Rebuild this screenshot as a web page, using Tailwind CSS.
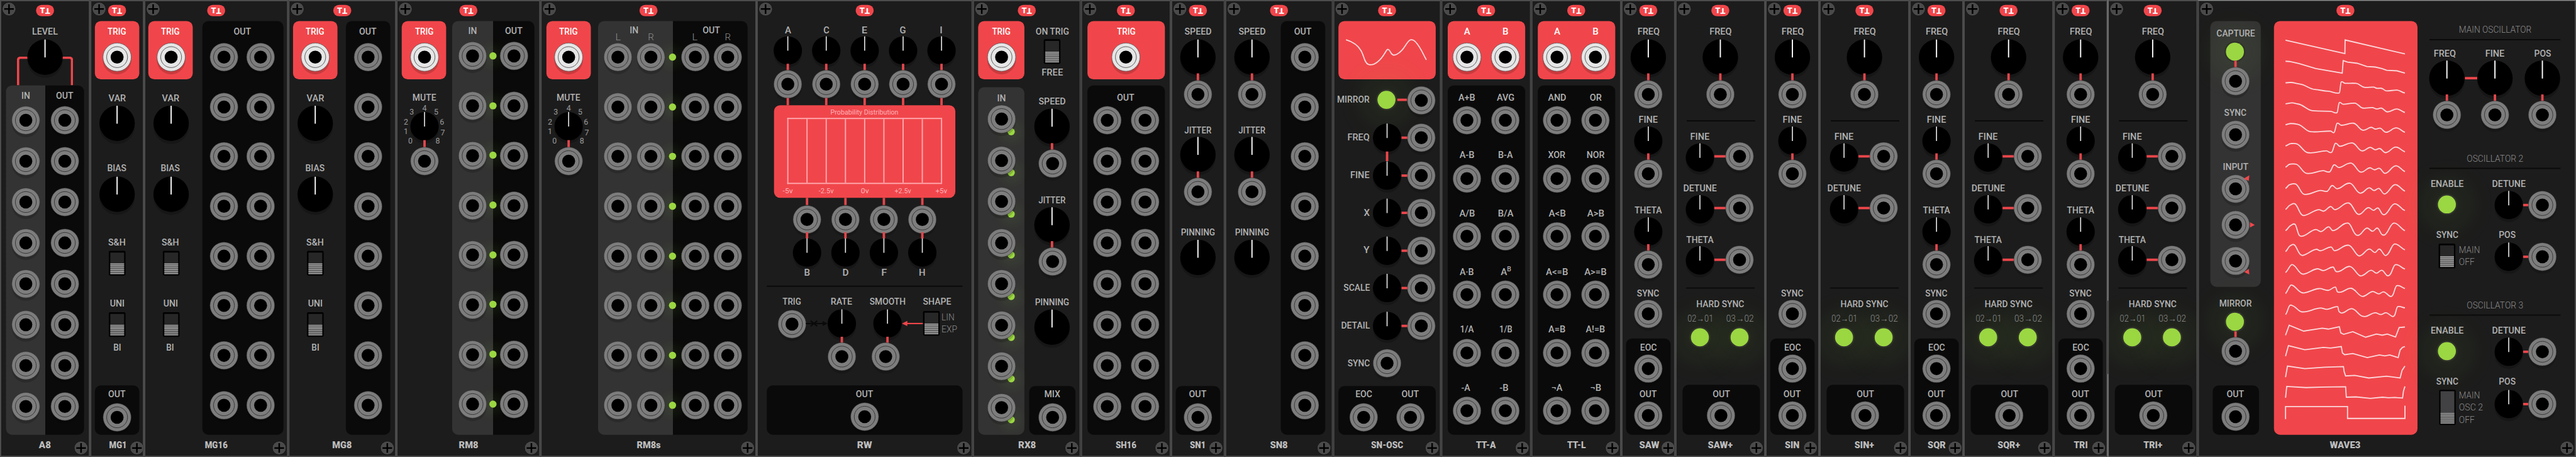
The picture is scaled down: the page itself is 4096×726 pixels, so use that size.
<!DOCTYPE html>
<html lang="en">
<head>
<meta charset="utf-8">
<title>Modular rack</title>
<script src="https://cdn.jsdelivr.net/npm/@tailwindcss/browser@4"></script>
</head>
<body class="bg-[#1c1c1c] overflow-hidden w-[4096px] h-[726px]">
<svg class="hidden">
  <defs>
    <g id="jack">
      <circle cx="24" cy="29" r="23.4" fill="#000" fill-opacity=".16"/>
      <circle cx="24" cy="24" r="23.3" fill="#7d7d7d" stroke="#303030" stroke-width=".6"/>
      <circle cx="24" cy="24" r="17.4" fill="none" stroke="#333" stroke-width="1"/>
      <circle cx="24" cy="24" r="10.8" fill="#000"/>
    </g>
    <g id="jack-light">
      <circle cx="24" cy="29" r="23.8" fill="#000" fill-opacity=".16"/>
      <circle cx="24" cy="24" r="23.5" fill="#e6e6e6" stroke="#555" stroke-width=".8"/>
      <circle cx="24" cy="24" r="17.4" fill="none" stroke="#555" stroke-width="1"/>
      <circle cx="24" cy="24" r="10.8" fill="#000"/>
    </g>
    <g id="knob-lg">
      <circle cx="30" cy="35" r="29.5" fill="#000" fill-opacity=".18"/>
      <circle cx="30" cy="30" r="29.5" fill="#000"/>
      <path d="M30 .8V30.6" stroke="#fff" stroke-width="2"/>
    </g>
    <g id="knob-sm">
      <circle cx="24" cy="29" r="23.5" fill="#000" fill-opacity=".18"/>
      <circle cx="24" cy="24" r="23.6" fill="#000"/>
      <path d="M24 .4V24.4" stroke="#e8e8e8" stroke-width="1.7"/>
    </g>
    <g id="screw">
      <circle cx="15" cy="15" r="11.6" fill="#000" fill-opacity=".2"/>
      <circle cx="15" cy="15" r="10.9" fill="#4a4a4a"/>
      <path d="M7 15H23M15 7V23" stroke="#000" stroke-width="2.6"/>
    </g>
    <g id="switch">
      <rect x=".2" y=".2" width="27.8" height="41" rx="2.2" fill="#000"/>
      <rect x="2.7" y="3" width="23" height="18.5" fill="#272727"/>
      <rect x="2.7" y="21" width="23" height="18.2" fill="#585858"/>
      <path d="M2.7 21.8h23M2.7 24.8h23M2.7 27.8h23M2.7 31h23M2.7 34.4h23M2.7 37.8h23" stroke="#a0a0a0" stroke-width="1.5"/>
    </g>
    <g id="switch-tall">
      <rect x=".2" y=".2" width="27.4" height="58.6" rx="2.2" fill="#000"/>
      <rect x="2.4" y="2.6" width="23" height="37" fill="#424245"/>
      <rect x="2.4" y="38.6" width="23" height="18.2" fill="#505050"/>
      <path d="M2.4 39.4h23M2.4 42.4h23M2.4 45.4h23M2.4 48.6h23M2.4 52h23M2.4 55.4h23" stroke="#a0a0a0" stroke-width="1.5"/>
    </g>
  </defs>
</svg>

<main id="rack" class="flex w-[4290px] h-[760px] origin-top-left [transform:scale(0.95478,0.95526)] text-[#b2b2b2] font-medium text-[16px] leading-none [font-family:Roboto,'Liberation_Sans',sans-serif]"></main>

<script>
// Set widths of the lettering, in px.
const WIDTHS = {
  TRIG:30, OUT:28, VAR:28, BIAS:31, 'S&H':28, UNI:23.5, BI:12, LEVEL:42, IN:13.5, MUTE:38.5, SPEED:44, JITTER:44,
  PINNING:56, FREE:34.5, 'ON TRIG':54.6, MIX:25.5, FREQ:36, FINE:31, THETA:44.5, SYNC:36, EOC:27, DETUNE:55,
  MIRROR:53, SCALE:43, DETAIL:47, X:9, Y:9, RATE:35, SMOOTH:59, SHAPE:46, 'A+B':27, AVG:28.5, 'A-B':24, 'B-A':23.5,
  'A/B':25, 'B/A':25, 'A·B':22.5, '1/A':22, '1/B':20.5, '-A':14, '-B':14, AND:29.5, OR:19, XOR:28, NOR:29,
  'A<B':27.5, 'A>B':27.5, 'A<=B':36, 'A>=B':36, 'A=B':27.5, 'A!=B':31, '¬A':17.5, '¬B':17.5, POS:27, ENABLE:54,
  CAPTURE:63, INPUT:41.5, A:9.5, B:9, C:9, D:9.5, E:8.5, F:8.5, G:9.5, H:10, I:3.6, L:8, R:9,
  A8:19, MG1:28.5, MG16:37, MG8:31.5, RM8:31.5, RM8s:39, RW:24, RX8:28.5, SH16:33.5, SN1:25.5, SN8:28.5, 'SN-OSC':52.5,
  'TT-A':32, 'TT-L':30, SAW:32.5, 'SAW+':40.5, SIN:23.5, 'SIN+':31.5, SQR:29, 'SQR+':36.5, TRI:22, 'TRI+':30.5, WAVE3:50,
  LIN:20.5, EXP:25, MAIN:34, OFF:25, 'OSC 2':39, 'MAIN OSCILLATOR':120, 'OSCILLATOR 2':93, 'OSCILLATOR 3':93,
  'HARD SYNC':78.7, '02→01':42, '03→02':45, 'Probability Distribution':112, '-5v':16, '-2.5v':24, '0v':12.5, '+2.5v':26.5, '+5v':18.5
};
const esc = s => s.replace(/&/g, '&amp;').replace(/</g, '&lt;');

// ---- parts: each is {x: centre, w, h, html, dy} ----
const use = (id, w, h, cls) => (x, dy = 0) => ({ x, w, h, dy, html: `<svg class="${cls} block overflow-visible"><use href="#${id}"/></svg>` });
const J = use('jack', 48, 48, 'w-[48px] h-[48px]');
const JL = use('jack-light', 48, 48, 'w-[48px] h-[48px]');
const K = use('knob-lg', 60, 60, 'w-[60px] h-[60px]');
const k = use('knob-sm', 48, 48, 'w-[48px] h-[48px]');
const SW = use('switch', 28, 42, 'w-[28px] h-[42px]');
const SWT = use('switch-tall', 28, 59, 'w-[28px] h-[59px]');
const label = (cls, align) => (t, x, dy = 0) => ({ x, w: 2, h: 20, dy,
  html: `<div class="flex w-[2px] h-[20px] items-center whitespace-nowrap ${align}"><span data-fit="${WIDTHS[t] || ''}" class="block shrink-0 ${cls}">${esc(t)}</span></div>` });
const L = label('', 'justify-center');
const LW = label('text-white', 'justify-center');
const LR = label('origin-right', 'justify-end');
const LD = label('font-light text-[#8c8c8c] origin-left', 'justify-start');
const LC = label('font-light text-[#8c8c8c]', 'justify-center');
const LP = label('text-[12px] font-normal text-[#ffb3b8]', 'justify-center');
const SUP = (x) => ({ x, w: 2, h: 20, html: `<div class="flex w-[2px] h-[20px] items-center justify-center whitespace-nowrap"><span class="block shrink-0 leading-none">A<sup class="text-[11px] leading-none -top-[6px]">B</sup></span></div>` });
const box = (w, h, cls) => (x, dy = 0) => ({ x, w, h, dy, html: `<div class="${cls}"></div>` });
const led = box(12, 12, 'size-[12px] rounded-full bg-[#9bd742] shadow-[0_0_22px_9px_rgba(155,215,66,0.11)]');
const LED = box(30, 30, 'size-[30px] rounded-full bg-[#9bd742] ring-[2.5px] ring-[#30332b] shadow-[0_0_50px_24px_rgba(155,215,66,0.085)]');
const V = box(4, 12, 'w-[4px] h-[12px] bg-[#e4464b]');
const Vs = box(4, 16, 'w-[4px] h-[16px] bg-[#f0464b]');
const H = (x0, x1, dy = 0) => ({ x: (x0 + x1) / 2, w: x1 - x0, h: 4, dy, html: `<div class="h-[4px] bg-[#f0464b]"></div>` });
const RULE = (x0, x1) => ({ x: (x0 + x1) / 2, w: x1 - x0, h: 2, html: `<div class="h-[2px] bg-[#0a0a0a]"></div>` });
const SVG = (x, w, h, inner, dy = 0) => ({ x, w, h, dy, html: `<svg class="block overflow-visible" width="${w}" height="${h}" viewBox="0 0 ${w} ${h}">${inner}</svg>` });

// ---- layout ----
const line = (ox, kids) => { let c = ox; return kids.map(p => {
  const ml = p.x - p.w / 2 - c; c = p.x + p.w / 2;
  return `<div class="shrink-0" style="width:${p.w.toFixed(2)}px;margin-left:${ml.toFixed(2)}px;margin-top:${2 * (p.dy || 0)}px">${p.html}</div>`; }).join(''); };
const stack = (ox, oy, rows) => { let c = oy; return rows.map(([y, ...kids]) => {
  const h = Math.max(...kids.map(p => p.h)), mt = y - h / 2 - c; c = y + h / 2;
  return `<div class="flex items-center shrink-0" style="height:${h.toFixed(2)}px;margin-top:${mt.toFixed(2)}px">${line(ox, kids)}</div>`; }).join(''); };
const panel = (x, y, w, h, cls, rows) => ({ x: x + w / 2, w, h, y,
  html: `<div class="flex flex-col ${cls}" style="height:${h}px">${stack(x, y, rows)}</div>` });
const PR = (...a) => [a[1] + a[3] / 2, panel(...a)];
const screw = '<svg class="size-[30px] block"><use href="#screw"/></svg>';
const logo = '<div class="flex w-[30px] h-[19px] shrink-0 items-center justify-center rounded-full bg-[#f0464b] text-white font-black text-[13.5px]"><span>T</span><span class="rotate-180">T</span></div>';

const module_ = (name, W, cols, dx = 0) => {
  let c = 0;
  const body = cols.map(p => { const ml = p.x - p.w / 2 - c; c = p.x + p.w / 2;
    return `<div class="shrink-0" style="width:${p.w}px;margin-left:${ml.toFixed(2)}px;margin-top:${p.y - 35}px">${p.html}</div>`; }).join('');
  return `<section class="flex flex-col shrink-0 h-[760px] overflow-hidden bg-[#1c1c1c] border-y-2 border-[#4f4f4f] shadow-[inset_2px_0_0_#4f4f4f,inset_-2px_0_0_#4f4f4f]" style="width:${W}px">
    <header class="grid grid-cols-[30px_1fr_30px] h-[33px] -mt-[2px] shrink-0">${screw}<div class="flex justify-center pt-[8px]" style="margin-left:${2 * dx}px">${logo}</div></header>
    <div class="flex items-start h-[688px] shrink-0 mt-[2px]">${body}</div>
    <footer class="grid grid-cols-[30px_1fr_30px] h-[35px] shrink-0"><span></span><div class="flex justify-center whitespace-nowrap pt-[10px] h-[30px]" style="margin-left:${2 * dx}px"><span data-fit="${WIDTHS[name]}" class="block shrink-0 font-black text-[15.5px] text-[#bdbdbd]">${name}</span></div><div class="pt-[7px] h-[37px]">${screw}</div></footer>
  </section>`;
};

const RED = 'rounded-[10px] bg-[#f0464b]', INK = 'rounded-[10px] bg-[#0a0a0a]', GREY = 'rounded-[10px] bg-[#333333]';
const SPLIT = 'rounded-[10px] bg-[linear-gradient(90deg,#333333_50%,#0a0a0a_50%)]';
const range = n => [...Array(n).keys()];
const STEP8 = 82.68, STEPL = 67.93;
const jacks = (y0, step, ...xs) => range(8).map(i => [y0 + i * step, ...xs.map(x => J(x))]);
const trig = (x, cx, w = 74, lx = cx) => PR(x, 35, w, 97, RED, [[53.3, LW('TRIG', lx)], [95, JL(cx)]]);
const out = (x, w, cx, y = 641, jy = 693.6, t = 'OUT') => PR(x, y, w, 723 - y, INK, [[656.3, L(t, cx)], [jy, J(cx)]]);
const col = (w, rows, x = 0) => panel(x, 35, w, 688, '', rows);

const gates = (lx, cx) => [[163.8, L('VAR', lx)], [205, K(cx)], [280.2, L('BIAS', lx)], [323.3, K(cx)], [402.8, L('S&H', lx)], [438, SW(44.5)],
  [505, L('UNI', lx)], [540.5, SW(44.5)], [578.2, L('BI', lx)]];

const dialText = [['4', 0, -31], ['3', -21.3, -24.4], ['2', -31, -8], ['1', -31, 8.5], ['0', -23.5, 24.2], ['5', 19.3, -24.4], ['6', 29, -8], ['7', 30.3, 10.5], ['8', 22, 24.2]]
  .map(([t, x, y]) => `<text x="${40 + x}" y="${44.8 + y}" text-anchor="middle" font-size="13" font-weight="400" fill="#9a9a9a">${t}</text>`).join('');
const mute = cx => [[162, L('MUTE', cx)], [210.4, SVG(cx, 80, 80, dialText + '<use href="#knob-sm" x="16" y="16"/>')], [238.5, V(cx)], [267.6, J(cx)]];

const oscCol = theta => [[53.3, L('FREQ', 45)], [95, K(45)], [128, V(45)], [156.6, J(45)],
  [199.2, L('FINE', 45)], [233.6, k(45)], [261, V(45)], [288.9, J(45)],
  ...(theta ? [[350.4, L('THETA', 45)], [384.8, k(45)], [412.3, V(45)], [440, J(45)]] : []),
  [487.6, L('SYNC', 45)], [522, J(45)],
  PR(8, 562.7, 74, 160.3, INK, [[577.8, L('EOC', 45)], [613, J(45)], [656.3, L('OUT', 45)], [691.2, J(45)]])];
const osc = (name, theta) => module_(name, 90, [col(90, oscCol(theta))]);
const oscPlus = (name, theta) => module_(name, 150, [col(150, [[53.3, L('FREQ', 75)], [95, K(75)], [128, V(75)], [156.6, J(75)],
  [200.7, RULE(19.3, 133)],
  ...[['FINE', 227.3, 261.5], ['DETUNE', 313.1, 347.2], ...(theta ? [['THETA', 399.4, 433]] : [])].flatMap(([t, ly, y]) =>
    [[ly, L(t, 41.3)], [y, k(41.3, .5), H(65, 84, -1), J(107.3, -1)]]),
  [478.9, RULE(18, 131.7)], [506.5, L('HARD SYNC', 75)], [529.8, LC('02→01', 41.7), LC('03→02', 107.3)], [560.8, LED(40.7), LED(106.7)],
  out(11.7, 129, 76.3, 640, 691.2)])]);

const logic = (name, pairs) => module_(name, 150, [col(150, [
  PR(10.6, 35, 129, 97, RED, [[53.3, LW('A', 43), LW('B', 107.3)], [95, JL(43), JL(107.3)]]),
  PR(10.6, 142, 129, 581, INK, pairs.flatMap(([a, b], i) => [
    [161.9 + i * 96.55, L(a, a[0] === '-' ? 40.7 : 43), b === 'A^B' ? SUP(108) : L(b, b[0] === '-' ? 105 : 107.3)],
    [200.2 + i * 96.62, J(43), J(107.3)]]))])]);

const row62 = [['FREQ'], ['FINE'], ['X'], ['Y'], ['SCALE'], ['DETAIL']].flatMap(([t], i) => {
  const y = 229.2 + i * 62.5;
  const r = [[y, LR(t, 60, -.7), k(90, 0), H(113.5, 123.5), J(146.7, .2)]];
  if (i === 0) r.push([y + 31.2, Vs(90)]);
  return r; });

// Wavetable frames, top to bottom.
const FRAMES = [
  '363,138 609,184 610,137 858,185',
  '363,210 380,211 418,218 488,235 598,251 602,208 620,213 660,217 700,228 735,230 762,235 782,241 825,243 858,251',
  '363,284 385,283 420,288 485,307 540,313 586,319 594,281 610,286 655,286 692,300 728,299 742,303 760,303 782,312 825,309 858,319',
  '363,356 390,353 415,357 475,380 550,382 576,387 586,352 602,358 650,354 684,371 722,369 742,374 760,371 785,384 825,374 858,386',
  '363,428 385,424 415,427 466,452 550,450 564,455 577,423 594,430 645,423 684,447 718,437 735,443 755,440 779,454 822,439 858,454',
  '363,501 385,493 410,494 455,524 532,518 554,523 570,492 588,502 640,491 680,518 714,506 735,514 754,510 778,524 820,505 858,521',
  '363,574 380,564 408,564 450,595 518,586 546,590 564,566 584,575 635,560 675,591 712,576 732,583 752,578 776,595 820,569 858,589',
  '363,647 380,634 405,632 440,667 508,654 535,657 556,637 577,648 630,629 672,663 710,645 730,654 750,647 774,666 817,634 858,656',
  '363,719 382,704 402,700 430,737 440,740 500,720 522,725 550,709 568,720 625,697 662,735 672,735 706,713 728,722 746,714 766,736 776,736 815,700 858,723',
  '363,792 385,774 402,770 420,808 432,811 488,788 510,795 542,779 560,792 622,766 655,806 668,807 700,783 724,794 744,783 764,806 775,806 812,766 858,792',
  '363,864 382,844 398,840 425,874 434,877 490,856 508,861 552,848 566,861 625,842 665,878 675,877 710,855 734,867 752,855 776,877 785,874 815,838 858,858',
  '363,936 388,909 395,910 430,940 440,941 495,923 520,929 560,917 572,932 585,932 630,915 672,947 682,946 718,928 740,938 762,928 786,947 796,943 818,909 858,924',
  '363,1008 385,979 392,980 428,1004 440,1006 502,991 540,997 570,986 578,1002 592,1003 635,990 678,1017 688,1017 724,1001 750,1009 770,1002 798,1018 806,1015 824,981 858,991',
  '363,1080 382,1048 390,1049 432,1071 508,1058 535,1062 579,1053 585,1070 597,1075 638,1060 682,1086 693,1087 734,1074 758,1080 780,1074 808,1087 814,1084 828,1053 858,1057',
  '363,1151 378,1117 438,1137 515,1127 540,1130 586,1122 592,1143 604,1148 642,1139 695,1158 740,1147 764,1151 785,1147 819,1157 834,1125 858,1123',
  '363,1223 375,1187 443,1201 520,1193 550,1195 594,1190 599,1212 608,1218 642,1214 702,1228 752,1219 775,1222 795,1219 830,1228 838,1202 848,1193 858,1190',
  '363,1295 371,1257 443,1266 525,1261 603,1259 606,1276 612,1291 650,1289 708,1298 782,1292 838,1298 846,1272 858,1257',
  '363,1366 368,1327 448,1331 520,1329 612,1328 615,1364 655,1363 715,1368 765,1364 790,1366 815,1365 848,1367 852,1343 858,1327',
  '363,1439 363,1396 620,1396 620,1437 858,1437 858,1393'];
const spline = (s, t) => { const p = s.split(' ').map(q => q.split(',').map(Number)); let d = `M${p[0]}`;
  for (let i = 0; i < p.length - 1; i++) { const a = p[i - 1] || p[i], b = p[i], c = p[i + 1], e = p[i + 2] || c, m = (c[0] - b[0]) / 2;
    const s1 = c[0] - a[0] ? (c[1] - a[1]) / (c[0] - a[0]) : 0, s2 = e[0] - b[0] ? (e[1] - b[1]) / (e[0] - b[0]) : 0;
    d += t ? `C${b[0] + m * .8},${(b[1] + s1 * m * t).toFixed(1)} ${c[0] - m * .8},${(c[1] - s2 * m * t).toFixed(1)} ${c}` : `L${c}`; }
  return d; };
const waves = FRAMES.map((f, i) => `<path d="${spline(f, [0, 0, .25, .3, .4, .5, .5, .5, .5, .5, .5, .5, .5, .35, 0, 0, 0, 0, 0][i])}" fill="none" stroke="#fbd9dc" stroke-width="1.9" vector-effect="non-scaling-stroke"/>`).join('');
const screen = { x: 246.1, w: 239, h: 688.5, y: 35, html: `<svg class="block h-[688px] w-[239px] rounded-[10px] bg-[#f0464b]" viewBox="315 72 595 1421" preserveAspectRatio="none">${waves}</svg>` };

const tri = d => SVG(63, 64, 48, `<use href="#jack" x="8"/><path d="${d}" fill="#f0464b"/>`);
const extra = y => [
  [y, L('ENABLE', 415.4), L('DETUNE', 517.9)],
  [y + 35, LED(414.6, -.4), k(518.3, .4), H(542, 551.5, .4), J(574.5, .4)],
  [y + 85.4, L('SYNC', 415.4), L('POS', 515.5)]];

const A = 'ACEGI', B = 'BDFH', ax = [52.3, 116.3, 180, 243.7, 307.7], bx = [84.3, 148.3, 212.2, 276];
const cells = range(8).map(() => '<i class="flex-1 border-r-2 border-[#ffa8ae]"></i>').join('');

document.getElementById('rack').innerHTML = [
  module_('A8', 150, [col(150, [
    [53.3, L('LEVEL', 75)],
    [118.5, { x: 75, w: 94, h: 48, html: '<div class="h-[48px] rounded-t-[6px] border-x-4 border-t-4 border-[#f0464b]"></div>' }],
    [95, K(75)],
    PR(10, 142, 130, 581, SPLIT, [[159, L('IN', 42.5), L('OUT', 107.7)], ...jacks(200.2, STEPL, 42.5, 107.7)])])]),
  module_('MG1', 90, [col(90, [trig(8, 45), ...gates(45, 45), out(8, 74, 45)])]),
  module_('MG16', 240, [col(97, [trig(7, 45, 74, 44), ...gates(43.8, 45)]),
    panel(97, 35, 135, 688, INK, [[53.3, L('OUT', 164)], ...jacks(95, STEP8, 133.4, 194.4)])]),
  module_('MG8', 180, [col(96, [trig(8, 45), ...gates(45, 45)]),
    panel(96, 35, 74, 688, INK, [[53.3, L('OUT', 133)], ...jacks(95, STEP8, 133.4)])]),
  module_('RM8', 240, [col(92, [trig(9.3, 46.7), ...mute(46.7)]),
    panel(92.7, 35, 137.6, 688, SPLIT, [[52.3, L('IN', 126.8), L('OUT', 196)],
      ...range(8).map(i => [93.5 + i * STEP8, led(161, -.4), J(127), J(196.2)])])]),
  module_('RM8s', 360, [col(96, [trig(9.7, 46.7), ...mute(46.7)]),
    panel(96.3, 35, 248.4, 688, SPLIT, [[49.9, L('IN', 156.3), L('OUT', 284.7)],
      [62, LC('L', 129.3), LC('R', 183.7), LC('L', 257.7), LC('R', 312)],
      ...range(8).map(i => [95 + i * STEP8, led(220), J(129.3), J(183.7), J(257.9), J(312.2)])])]),
  module_('RW', 360, [col(360, [
    [50, ...[...A].map((t, i) => L(t, ax[i]))],
    [84.3, ...ax.map(x => k(x))],
    [111.8, ...ax.map(x => V(x))],
    [139.6, ...ax.map(x => J(x))],
    [169, ...ax.map(x => V(x))],
    PR(28.7, 175, 302.6, 154, RED, [
      [186.8, LP('Probability Distribution', 180)],
      [251.4, { x: 180.1, w: 257.6, h: 110, html: `<div class="flex h-[110px] border-l-2 border-y-2 border-[#ffa8ae]">${cells}</div>` }],
      [317, ...['-5v', '-2.5v', '0v', '+2.5v', '+5v'].map((t, i) => LP(t, ax[i]))]]),
    [335, ...bx.map(x => V(x))],
    [364.5, ...bx.map(x => J(x))],
    [392, ...bx.map(x => V(x))],
    [419.7, ...bx.map(x => k(x))],
    [453.7, ...[...B].map((t, i) => L(t, bx[i]))],
    [476, RULE(17, 343)],
    [502, L('TRIG', 58.7), L('RATE', 141.7), L('SMOOTH', 218.3), L('SHAPE', 300.3)],
    [538.3, J(58.7, .5), SVG(100, 36, 16, '<path d="M0 8H30M8 3.5L19 12.5M8 12.5L19 3.5" stroke="#0a0a0a" stroke-width="2.2"/><path d="M28 4L36.500 8L28 12Z" fill="#0a0a0a"/>'), k(141.7),
      k(218.3), SVG(259.8, 35, 12, '<path d="M35 6H7" stroke="#f0464b" stroke-width="2.2"/><path d="M0 6L9 1.700V10.300Z" fill="#f0464b"/>'), SW(291.5),
      { x: 309, w: 2, h: 40, html: `<div class="flex flex-col">${LD('LIN').html}${LD('EXP').html}</div>` }],
    [566, V(141.7), V(218.3)],
    [593.3, J(141.7), J(215.4)],
    out(17, 326, 180, 641, 693)])]),
  module_('RX8', 180, [
    col(90, [trig(9, 47.6, 77),
      PR(9, 145, 77, 578, GREY, [[163.8, L('IN', 47.5)],
        ...range(8).map(i => [198.2 + i * 68.5, led(63.5, 20.8), J(47.5)])])]),
    col(90, [[53.3, L('ON TRIG', 132.4)], [85.8, SW(132)], [121, L('FREE', 132.4)],
      [169, L('SPEED', 132.4)], [210.4, K(132.4)], [244, V(132.4)], [272.4, J(132.6)],
      [333, L('JITTER', 132.4)], [373.7, K(132.4)], [407, V(132.4)], [435.2, J(132.6)],
      [503, L('PINNING', 132.4)], [543.8, K(132.4)],
      out(94.4, 77, 132.6, 642, 693.6, 'MIX')], 90)]),
  module_('SH16', 150, [col(150, [trig(10.5, 75.2, 129.3),
    PR(10.5, 142, 129, 581, INK, [[161.9, L('OUT', 75)], ...jacks(200.2, STEPL, 44, 107.4)])])]),
  ...['SN1', 'SN8'].map(n => {
    const rows = [[53.3, L('SPEED', 45)], [95, K(45)], [128, V(45)], [156.6, J(45)], [216.7, L('JITTER', 45)], [257.4, K(45)], [290.7, V(45)], [319.4, J(45)],
      [387.3, L('PINNING', 45)], [428, K(45)]];
    return n === 'SN1' ? module_(n, 90, [col(90, [...rows, out(8, 74, 45, 642)])])
      : module_(n, 180, [col(90, rows), panel(93.2, 35, 73.6, 688, INK, [[53.3, L('OUT', 129.5)], ...jacks(95, STEP8, 133.4)])]); }),
  module_('SN-OSC', 180, [col(180, [
    [83.5, { x: 90, w: 162, h: 97, html: '<svg class="block h-[97px] w-[162px] rounded-[10px] bg-[#f0464b]" viewBox="52 72 437 200" preserveAspectRatio="none"><path d="M86 136C112 142 140 155 153 173C168 192 168 216 187 221C214 227 242 206 262 180C270 169 275 164 284 176C291 188 300 192 314 186C334 178 344 166 357 151C370 137 376 133 389 138C412 147 432 185 447 205" fill="none" stroke="#fbd9dc" stroke-width="1.9" vector-effect="non-scaling-stroke"/></svg>' }],
    [166.3, LR('MIRROR', 60, -.5), LED(89.1, -.5), H(107, 123.500, .2), J(146.7, .4)],
    ...row62,
    [604, LR('SYNC', 60, -.5), J(90)],
    PR(9.2, 642, 161.7, 81, INK, [[656.3, L('EOC', 51.4), L('OUT', 128.7)], [693.6, J(51.4), J(128.6)]])])]),
  logic('TT-A', [['A+B', 'AVG'], ['A-B', 'B-A'], ['A/B', 'B/A'], ['A·B', 'A^B'], ['1/A', '1/B'], ['-A', '-B']]),
  logic('TT-L', [['AND', 'OR'], ['XOR', 'NOR'], ['A<B', 'A>B'], ['A<=B', 'A>=B'], ['A=B', 'A!=B'], ['¬A', '¬B']]),
  osc('SAW', true), oscPlus('SAW+', true), osc('SIN', false), oscPlus('SIN+', false),
  osc('SQR', true), oscPlus('SQR+', true), osc('TRI', true), oscPlus('TRI+', true),
  module_('WAVE3', 630, [
    col(126, [
      PR(21.3, 35, 83.6, 442.4, GREY, [
        [55.7, L('CAPTURE', 63)], [85.8, LED(62.3)], [107.5, V(63)], [135.2, J(63)],
        [187.6, L('SYNC', 63)], [224, J(63)], [277.7, L('INPUT', 63)],
        [314, tri('M45.500 7L55 1.500L54 11Z')], [374.2, tri('M56 19.500L64 24L56 28.500Z')], [433.8, tri('M46.500 42.500L54 37L55 46.500Z')]]),
      [505, L('MIRROR', 63)], [535, LED(62.3)], [557, V(63)], [584.500, J(63)],
      out(24.5, 77, 63, 641, 693)]),
    screen,
    col(250, [
      [49.4, LC('MAIN OSCILLATOR', 495)], [65.9, RULE(386, 604)],
      [88.7, L('FREQ', 411.4), L('FINE', 495), L('POS', 574.5)],
      [129.9, K(415.4), H(445, 466), K(495), K(574.5)],
      [163.500, V(415.4), V(495), V(574.5)],
      [191.500, J(415.4), J(495), J(574.5)],
      [263.7, LC('OSCILLATOR 2', 495)], [280, RULE(386, 604)],
      ...extra(305.8),
      [426.500, SW(415.2), { x: 436.500, w: 2, h: 40, html: `<div class="flex flex-col">${LD('MAIN').html}${LD('OFF').html}</div>` }, k(518.3, .5), H(542, 551.5, .5), J(574.5, .5)],
      [508, LC('OSCILLATOR 3', 495)], [524.4, RULE(386, 604)],
      ...extra(549.6),
      [677.6, SWT(415.6), { x: 436.500, w: 2, h: 60, html: `<div class="flex flex-col">${LD('MAIN').html}${LD('OSC 2').html}${LD('OFF').html}</div>` }, k(518.3, -5.8), H(542, 551.5, -5.8), J(574.5, -5.8)]
    ], 370)], -69)
].join('') + '<div class="absolute left-[3510px] top-0 flex w-px h-[760px] flex-col justify-between"><i class="h-[500px] bg-[#999]"></i><i class="h-[138px] bg-[#999]"></i></div><div class="absolute left-[3660px] top-0 h-px w-[630px] bg-[#8c928f]"></div>';

// Keep each label at its engraved width, whenever its natural width is known or changes.
const fit = new ResizeObserver(list => {
  for (const { target, contentRect } of list) {
    const w = parseFloat(target.dataset.fit);
    if (w && contentRect.width) target.style.transform = `scaleX(${((w + 1) / contentRect.width).toFixed(3)})`;
  }
});
document.querySelectorAll('[data-fit]').forEach(el => fit.observe(el));
</script>
</body>
</html>
